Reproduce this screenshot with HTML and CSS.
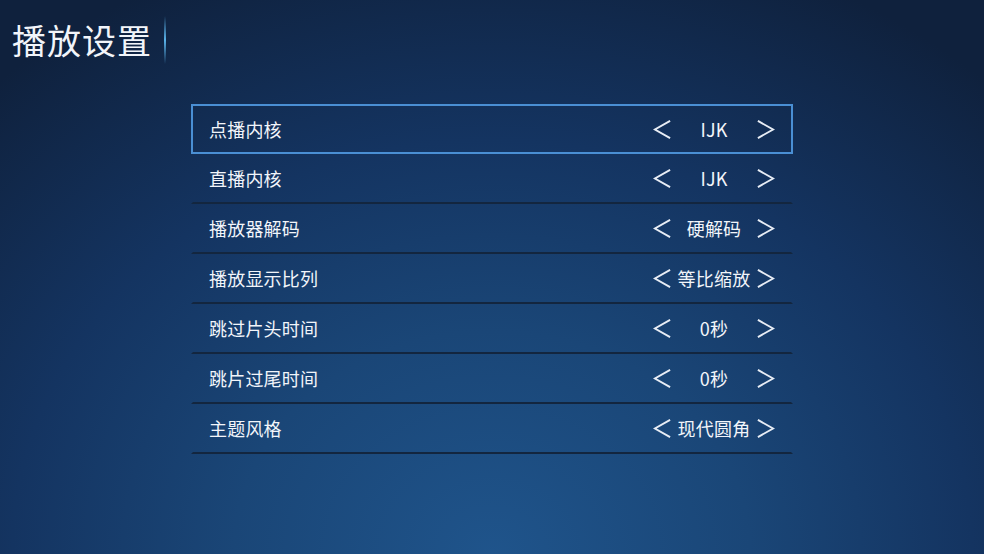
FILE: index.html
```html
<!DOCTYPE html>
<html lang="zh">
<head>
<meta charset="utf-8">
<link rel="stylesheet" href="styles.css">
</head>
<body>
<div class="page">
  <header class="header">
    <h1 class="title">播放设置</h1>
    <span class="glow"></span>
  </header>
  <ul class="list">
    <li class="row focused"><span class="label">点播内核</span><span class="ctrl"><svg class="arr" viewBox="0 0 20 22"><polyline points="18,2 2,11 18,20"/></svg><span class="val">IJK</span><svg class="arr" viewBox="0 0 20 22"><polyline points="2,2 18,11 2,20"/></svg></span></li>
    <li class="row"><span class="label">直播内核</span><span class="ctrl"><svg class="arr" viewBox="0 0 20 22"><polyline points="18,2 2,11 18,20"/></svg><span class="val">IJK</span><svg class="arr" viewBox="0 0 20 22"><polyline points="2,2 18,11 2,20"/></svg></span></li>
    <li class="row"><span class="label">播放器解码</span><span class="ctrl"><svg class="arr" viewBox="0 0 20 22"><polyline points="18,2 2,11 18,20"/></svg><span class="val">硬解码</span><svg class="arr" viewBox="0 0 20 22"><polyline points="2,2 18,11 2,20"/></svg></span></li>
    <li class="row"><span class="label">播放显示比列</span><span class="ctrl"><svg class="arr" viewBox="0 0 20 22"><polyline points="18,2 2,11 18,20"/></svg><span class="val">等比缩放</span><svg class="arr" viewBox="0 0 20 22"><polyline points="2,2 18,11 2,20"/></svg></span></li>
    <li class="row"><span class="label">跳过片头时间</span><span class="ctrl"><svg class="arr" viewBox="0 0 20 22"><polyline points="18,2 2,11 18,20"/></svg><span class="val">0秒</span><svg class="arr" viewBox="0 0 20 22"><polyline points="2,2 18,11 2,20"/></svg></span></li>
    <li class="row"><span class="label">跳片过尾时间</span><span class="ctrl"><svg class="arr" viewBox="0 0 20 22"><polyline points="18,2 2,11 18,20"/></svg><span class="val">0秒</span><svg class="arr" viewBox="0 0 20 22"><polyline points="2,2 18,11 2,20"/></svg></span></li>
    <li class="row"><span class="label">主题风格</span><span class="ctrl"><svg class="arr" viewBox="0 0 20 22"><polyline points="18,2 2,11 18,20"/></svg><span class="val">现代圆角</span><svg class="arr" viewBox="0 0 20 22"><polyline points="2,2 18,11 2,20"/></svg></span></li>
  </ul>
</div>
</body>
</html>
```
FILE: styles.css
```css
html, body {
  margin: 0;
  padding: 0;
  height: 100%;
}
body {
  font-family: "Noto Sans CJK SC", "Noto Sans", Roboto, sans-serif;
  color: #f2f5fa;
  background: radial-gradient(ellipse 75% 115% at 50% 100%, #1f548b 0%, #1a4677 35%, #143461 65%, #0f213d 100%);
  overflow: hidden;
}
.page {
  width: 984px;
  height: 554px;
  display: flex;
  flex-direction: column;
}
.header {
  display: flex;
  align-items: center;
  height: 80px;
  padding-left: 12px;
  gap: 12px;
}
.title {
  margin: 0;
  font-size: 34px;
  font-weight: 400;
  letter-spacing: 1px;
  line-height: 1;
}
.glow {
  width: 2px;
  height: 48px;
  background: linear-gradient(to bottom, rgba(80,170,230,0) 0%, #5ab3ea 50%, rgba(80,170,230,0) 100%);
}
.list {
  list-style: none;
  margin: 24px 0 0 191px;
  padding: 0;
  width: 602px;
}
.row {
  box-sizing: border-box;
  height: 50px;
  display: flex;
  align-items: center;
  padding-left: 16px;
  padding-right: 16px;
  border-left: 2px solid transparent;
  border-right: 2px solid transparent;
  border-top: 0;
  border-bottom: 2px solid #13263f;
  font-size: 18px;
}
.row.focused {
  border: 2px solid #4a8fd4;
}
.label {
  flex: 1;
  line-height: 1;
  letter-spacing: 0.2px;
}
.ctrl {
  display: flex;
  align-items: center;
  gap: 4px;
}
.val {
  width: 76px;
  text-align: center;
  line-height: 1;
  letter-spacing: 0.2px;
}
.arr {
  width: 19px;
  height: 21px;
  fill: none;
  stroke: #e8edf5;
  stroke-width: 2;
}
```
